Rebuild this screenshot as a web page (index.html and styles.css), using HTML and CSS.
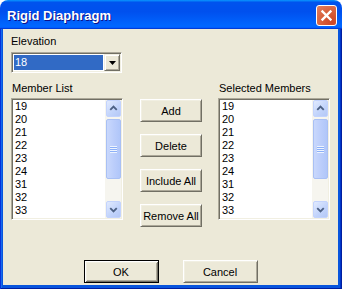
FILE: index.html
```html
<!DOCTYPE html>
<html>
<head>
<meta charset="utf-8">
<link rel="stylesheet" href="styles.css">
</head>
<body>
<div class="window">
  <div class="titlebar">
    <span class="title">Rigid Diaphragm</span>
    <div class="close">
      <svg width="19" height="19" viewBox="0 0 19 19"><path d="M5.5 5.5 L13.5 13.5 M13.5 5.5 L5.5 13.5" stroke="#fff" stroke-width="2.4" stroke-linecap="square"/></svg>
    </div>
  </div>
  <div class="frame">
    <div class="client">
      <div class="label">Elevation</div>
      <div class="combo">
        <div class="combo-field"><span class="combo-value">18</span></div>
        <div class="combo-btn"><svg width="7" height="4" viewBox="0 0 7 4"><path d="M0 0 H7 L3.5 4 Z" fill="#000"/></svg></div>
      </div>
      <div class="lists">
        <div class="col">
          <div class="label label-list">Member List</div>
          <div class="listbox">
            <ul class="items">
              <li>19</li><li>20</li><li>21</li><li>22</li><li>23</li><li>24</li><li>31</li><li>32</li><li>33</li>
            </ul>
            <div class="scrollbar">
              <div class="sb-btn"><svg width="14" height="15" viewBox="0 0 14 15"><path d="M3.5 9 L7 5.5 L10.5 9" fill="none" stroke="#4D6185" stroke-width="2"/></svg></div>
              <div class="sb-thumb"><span class="grip"></span></div>
              <div class="sb-track"></div>
              <div class="sb-btn"><svg width="14" height="15" viewBox="0 0 14 15"><path d="M3.5 6 L7 9.5 L10.5 6" fill="none" stroke="#4D6185" stroke-width="2"/></svg></div>
            </div>
          </div>
        </div>
        <div class="actions">
          <button class="btn">Add</button>
          <button class="btn">Delete</button>
          <button class="btn">Include All</button>
          <button class="btn">Remove All</button>
        </div>
        <div class="col col-right">
          <div class="label label-list label-sel">Selected Members</div>
          <div class="listbox">
            <ul class="items">
              <li>19</li><li>20</li><li>21</li><li>22</li><li>23</li><li>24</li><li>31</li><li>32</li><li>33</li>
            </ul>
            <div class="scrollbar">
              <div class="sb-btn"><svg width="14" height="15" viewBox="0 0 14 15"><path d="M3.5 9 L7 5.5 L10.5 9" fill="none" stroke="#4D6185" stroke-width="2"/></svg></div>
              <div class="sb-thumb"><span class="grip"></span></div>
              <div class="sb-track"></div>
              <div class="sb-btn"><svg width="14" height="15" viewBox="0 0 14 15"><path d="M3.5 6 L7 9.5 L10.5 6" fill="none" stroke="#4D6185" stroke-width="2"/></svg></div>
            </div>
          </div>
        </div>
      </div>
      <div class="footer">
        <button class="btn btn-default">OK</button>
        <button class="btn btn-wide">Cancel</button>
      </div>
    </div>
  </div>
</div>
</body>
</html>
```

FILE: styles.css
```css
* { box-sizing: border-box; }
html, body { margin: 0; padding: 0; background: #fff; }
body { font-family: "Liberation Sans", Arial, sans-serif; font-size: 11px; color: #000; }

.window {
  width: 342px;
  height: 289px;
  display: flex;
  flex-direction: column;
  border-radius: 8px 8px 0 0;
  overflow: hidden;
}

.titlebar {
  height: 29px;
  flex: none;
  display: flex;
  align-items: center;
  padding: 0 5px 0 7px;
  background: linear-gradient(180deg, #0997ff, #0053ee 8%, #0050ee 40%, #0066ff 88%, #0066ff 93%, #005bff 95%, #003dd7 96%, #003dd7);
}

.title {
  flex: 1;
  color: #fff;
  font-weight: bold;
  font-size: 13px;
  text-shadow: 1px 1px #0f1089;
  padding-top: 1px;
}

.close {
  width: 21px;
  height: 21px;
  border: 1px solid #fff;
  border-radius: 3px;
  background: radial-gradient(circle at 80% 85%, #cc4628 0%, #d55a36 40%, #e3805f 100%);
  display: flex;
  align-items: center;
  justify-content: center;
  margin-top: 1px;
}

.frame {
  flex: 1;
  display: flex;
  padding: 0 4px 4px 3px;
  background: #0855dd;
  box-shadow: inset 1px 0 #0831d9, inset -1px 0 #001ea0, inset 0 -1px #001ea0, inset 2px 0 #166aee, inset -2px 0 #0036c9;
}

.client {
  flex: 1;
  background: #ece9d8;
  padding: 6px 8px 0 8px;
  display: flex;
  flex-direction: column;
}

.label { line-height: 13px; height: 13px; white-space: nowrap; }

.combo {
  margin-top: 4px;
  width: 111px;
  height: 21px;
  display: flex;
  border: 1px solid;
  border-color: #aca899 #fff #fff #aca899;
  box-shadow: inset 1px 1px #716f64, inset -1px -1px #f1efe2;
  padding: 1px;
  background: #fff;
}

.combo-field {
  flex: 1;
  padding: 1px;
}

.combo-value {
  display: block;
  height: 100%;
  background: #316ac5;
  color: #fff;
  line-height: 15px;
  padding-left: 1px;
}

.combo-btn {
  width: 16px;
  flex: none;
  background: #ece9d8;
  border: 1px solid;
  border-color: #f1efe2 #716f64 #716f64 #f1efe2;
  box-shadow: inset 1px 1px #fff, inset -1px -1px #aca899;
  display: flex;
  align-items: center;
  justify-content: center;
}

.lists {
  margin-top: 9px;
  display: flex;
  align-items: flex-start;
}

.col { width: 112px; flex: none; }
.label-list { margin-bottom: 3px; padding-left: 1px; }

.listbox {
  width: 112px;
  height: 122px;
  display: flex;
  background: #fff;
  border: 1px solid;
  border-color: #aca899 #fff #fff #aca899;
  box-shadow: inset 1px 1px #716f64, inset -1px -1px #f1efe2;
  padding: 1px;
}

.items {
  list-style: none;
  margin: 0;
  padding: 0 0 0 2px;
  flex: 1;
  overflow: hidden;
}
.items li { line-height: 13px; height: 13px; }

.scrollbar {
  width: 16px;
  flex: none;
  display: flex;
  flex-direction: column;
  background: #f6f5ef;
}

.sb-btn {
  height: 17px;
  flex: none;
  border: 1px solid #c3d3fd;
  border-radius: 2px;
  background: linear-gradient(135deg, #e1eafe, #c1d3fb 60%, #b4c8f6);
  display: flex;
  align-items: center;
  justify-content: center;
  margin: 0 0 0 1px;
}

.sb-thumb {
  height: 60px;
  flex: none;
  margin: 2px 0 0 1px;
  border: 1px solid #a9c0f4;
  border-radius: 2px;
  background: linear-gradient(90deg, #c9d8fc, #bccefb 50%, #b0c6f9);
  display: flex;
  align-items: center;
  justify-content: center;
}

.grip {
  width: 7px;
  height: 7px;
  background: repeating-linear-gradient(180deg, #eef4fe 0 1px, #8cb0f8 1px 2px);
}

.sb-track { flex: 1; }

.actions {
  width: 62px;
  flex: none;
  margin: 17px 16px 0 17px;
  display: flex;
  flex-direction: column;
  gap: 12px;
}

.btn {
  font-family: "Liberation Sans", Arial, sans-serif;
  font-size: 11px;
  color: #000;
  height: 23px;
  width: 62px;
  background: #ece9d8;
  border: 1px solid;
  border-color: #fff #716f64 #716f64 #fff;
  box-shadow: inset 1px 1px #f1efe2, inset -1px -1px #aca899;
  padding: 0;
  margin: 0;
}

.footer {
  margin-top: 33px;
  display: flex;
  justify-content: center;
  gap: 24px;
}

.btn-wide { width: 75px; }

.btn-default {
  width: 75px;
  border: 1px solid #000;
  box-shadow: inset 1px 1px #fff, inset -1px -1px #716f64, inset 2px 2px #f1efe2, inset -2px -2px #aca899;
}
```
